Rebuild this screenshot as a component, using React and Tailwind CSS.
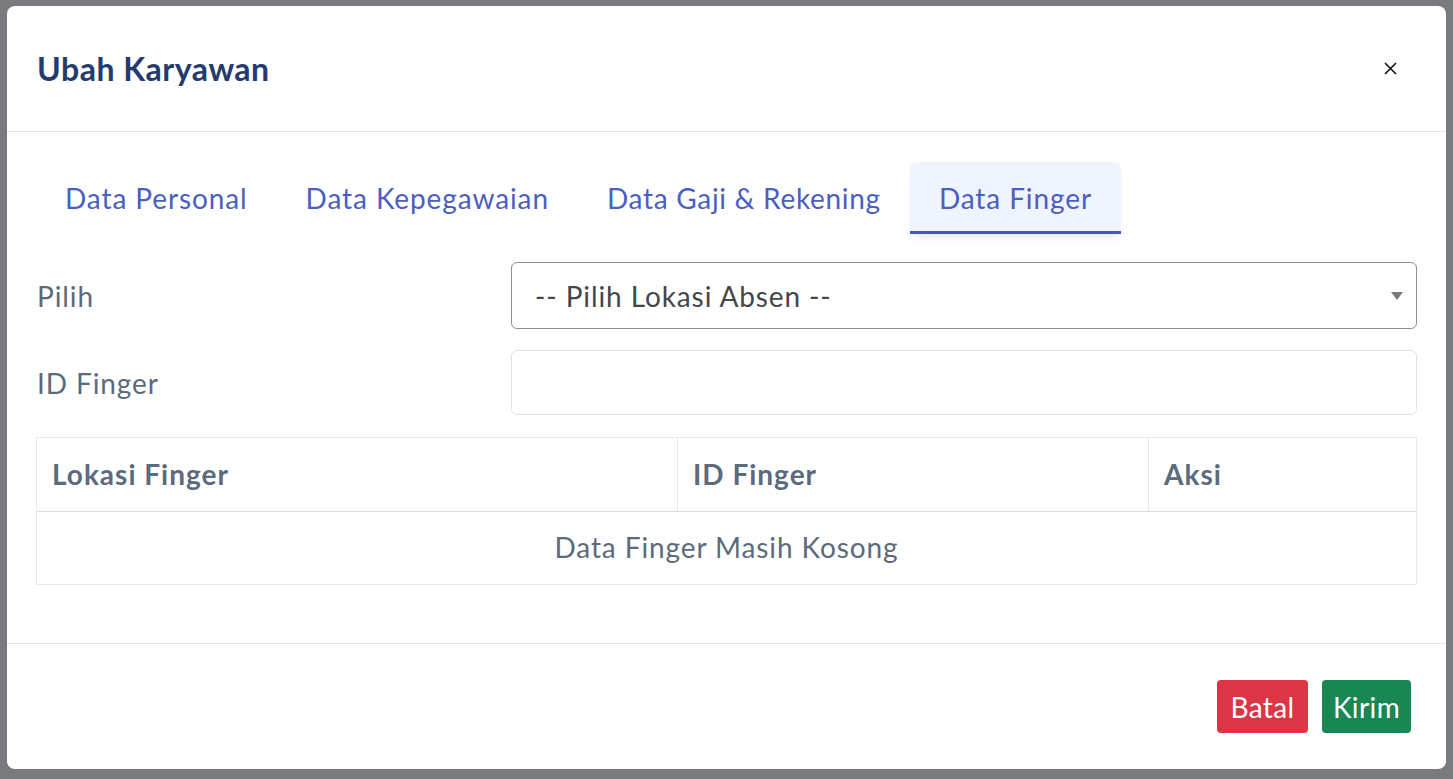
import React from 'react';

const tabs = ['Data Personal', 'Data Kepegawaian', 'Data Gaji & Rekening', 'Data Finger'];

const CloseIcon = () => (
  <svg width="13" height="13" viewBox="0 0 13 13" fill="none" stroke="#111" strokeWidth="1.6">
    <path d="M1 1L12 12M12 1L1 12" />
  </svg>
);

const App = () => {
  const [active, setActive] = React.useState(3);

  return (
    <div className="min-h-screen w-full bg-[#797a7d] pt-[6px] pl-[7px] pr-[7px] pb-[10px] font-['Lato','Noto_Sans',sans-serif] tracking-[0.9px]">
      <div className="bg-white rounded-[8px] w-full h-[763px] flex flex-col">
        {/* Header */}
        <div className="h-[126px] shrink-0 flex items-center justify-between pl-[30px] pr-[49px] border-b border-[#dfe3ea]">
          <h5 className="text-[32px] font-bold text-[#243b6e] tracking-[0.5px]">Ubah Karyawan</h5>
          <button className="w-[13px] h-[13px] flex items-center justify-center">
            <CloseIcon />
          </button>
        </div>

        {/* Body */}
        <div className="flex-1 px-[29px] pt-[30px]">
          <div className="flex">
            {tabs.map((t, i) => (
              <button
                key={t}
                onClick={() => setActive(i)}
                className={`px-[29px] pt-[15px] pb-[12px] text-[28px] leading-[42px] text-[#4a5fc1] rounded-t-[6px] border-b-[3px] ${
                  i === 2 ? 'tracking-[0.7px]' : ''
                } ${
                  active === i
                    ? 'bg-[#eff4fe] border-[#4558b9] shadow-[0_6px_8px_-4px_rgba(60,80,140,0.18)]'
                    : 'border-transparent'
                }`}
              >
                {t}
              </button>
            ))}
          </div>

          <div className="mt-[28px] grid grid-cols-[475px_1fr] items-center gap-y-[21px]">
            <label className="text-[28px] text-[#5c6b7c] pl-px">Pilih</label>
            <div className="h-[67px] border border-[#8d8f93] rounded-[6px] flex items-center justify-between pl-[23px] pr-[13px]">
              <span className="text-[28px] text-[#444749]">-- Pilih Lokasi Absen --</span>
              <svg width="12" height="8" viewBox="0 0 12 8">
                <path d="M0 0H12L6 8Z" fill="#7a7a7a" />
              </svg>
            </div>

            <label className="text-[28px] text-[#5c6b7c] pl-px">ID Finger</label>
            <div className="h-[65px] border border-[#dce5ee] rounded-[6px]"></div>
          </div>

          <div className="mt-[22px] border border-[#e6e9ed]">
            <div className="grid grid-cols-[640px_471px_1fr] h-[74px] border-b border-[#dadde1]">
              <div className="flex items-center pb-[2px] px-[15px] text-[28px] font-bold text-[#5c6b7c] tracking-[1px]">Lokasi Finger</div>
              <div className="flex items-center pb-[2px] px-[15px] text-[28px] font-bold text-[#5c6b7c] tracking-[1px] border-l border-[#e6e9ed]">ID Finger</div>
              <div className="flex items-center pb-[2px] px-[15px] text-[28px] font-bold text-[#5c6b7c] tracking-[1px] border-l border-[#e6e9ed]">Aksi</div>
            </div>
            <div className="h-[72px] flex items-center justify-center pb-[2px] text-[28px] text-[#5c6b7c]">
              Data Finger Masih Kosong
            </div>
          </div>
        </div>

        {/* Footer */}
        <div className="h-[126px] shrink-0 border-t border-[#dfe3ea] flex items-center justify-end gap-[14px] pr-[35px]">
          <button className="h-[53px] w-[91px] rounded-[4px] bg-[#dc3545] text-white text-[28px] tracking-[0.4px]">Batal</button>
          <button className="h-[53px] w-[89px] rounded-[4px] bg-[#198754] text-white text-[28px] tracking-[0.4px]">Kirim</button>
        </div>
      </div>
    </div>
  );
};

export default App;
